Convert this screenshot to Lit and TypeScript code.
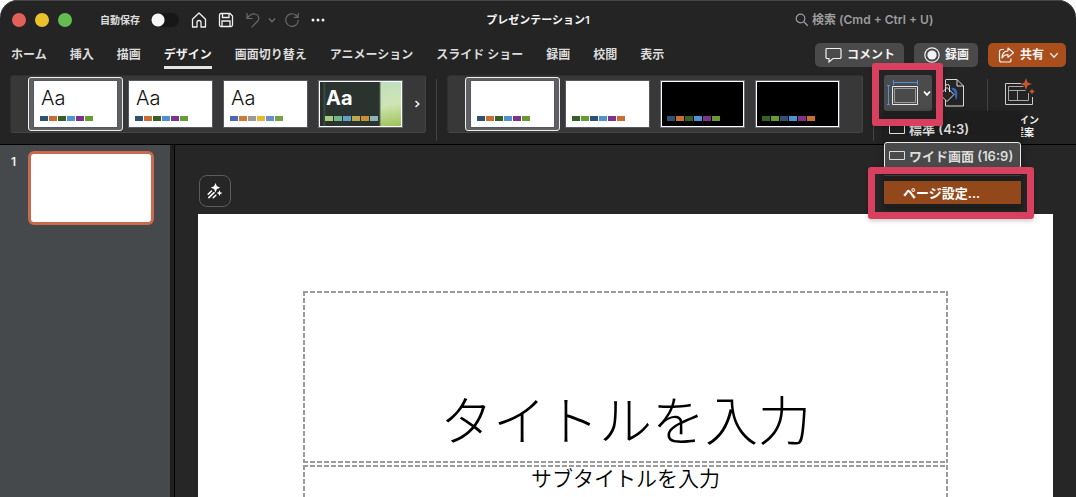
import { LitElement, html, css, svg, nothing } from "lit";
import { customElement, property } from "lit/decorators.js";
import { classMap } from "lit/directives/class-map.js";
import { styleMap } from "lit/directives/style-map.js";

interface Design {
  name: string;
  kind: "light" | "plain" | "black" | "green";
  colors: string[];
  selected?: boolean;
}

const office = ["#2f5274", "#cb6d33", "#376026", "#4f92d1", "#7f3289", "#679b33"];
const shuffled = ["#376026", "#679b33", "#2f5274", "#4f92d1", "#7f3289", "#cb6d33"];

const themes: Design[] = [
  { name: "Office テーマ", kind: "light", colors: office, selected: true },
  { name: "Office テーマ 2", kind: "light", colors: office },
  { name: "Office 2013", kind: "light", colors: ["#4a68b8", "#cf7a37", "#999999", "#e8b92c", "#6690cc", "#77a044"] },
  { name: "グリーン", kind: "green", colors: ["#a5ce7d", "#72b78c", "#639fc8", "#bda84f", "#c98f35", "#8fb3bb"] },
];

const variants: Design[] = [
  { name: "バリエーション 1", kind: "plain", colors: office, selected: true },
  { name: "バリエーション 2", kind: "plain", colors: shuffled },
  { name: "バリエーション 3", kind: "black", colors: office },
  { name: "バリエーション 4", kind: "black", colors: shuffled },
];

const tabs = ["ホーム", "挿入", "描画", "デザイン", "画面切り替え", "アニメーション", "スライド ショー", "録画", "校閲", "表示"];

const icon = (w: number, h: number, body: unknown) =>
  html`<svg width=${w} height=${h} viewBox="0 0 ${w} ${h}" fill="none" stroke="currentColor" aria-hidden="true">${body}</svg>`;

const homeIcon = icon(16, 16, svg`<path d="M1.5 7.2 8 1l6.500 6.200V15H10V10.500a2 2 0 0 0-4 0V15H1.500z" stroke-width="1.300" stroke-linejoin="round"/>`);
const saveIcon = icon(16, 16, svg`<path d="M1.500 3a1.500 1.500 0 0 1 1.500-1.500H12l2.500 2.500V13a1.500 1.500 0 0 1-1.500 1.500H3A1.500 1.500 0 0 1 1.500 13zM4.500 1.500v4h6.500v-4M4 14.500V9h8v5.500" stroke-width="1.300"/>`);
const undoIcon = icon(14, 16, svg`<path d="M1 1v5.500h5.500M1.300 6.200C3.500 3 6 1.500 9 2c3.500.6 5 4.200 2.800 7L5.500 15.300" stroke-width="1.200"/>`);
const redoIcon = icon(16, 16, svg`<path d="M14.300 8A6.300 6.300 0 1 1 12 3.200L14 5.200M14.200 1v4.400H9.800" stroke-width="1.200"/>`);
const chevron = (w: number, sw: number) =>
  html`<svg width=${w} height=${w} viewBox="0 0 8 8" fill="none" stroke="currentColor" stroke-width=${sw} aria-hidden="true"><path d="M1 2.500 4 5.800 7 2.500"/></svg>`;
const dotsIcon = icon(14, 4, svg`<g fill="currentColor" stroke="none"><circle cx="2" cy="2" r="1.500"/><circle cx="7" cy="2" r="1.500"/><circle cx="12" cy="2" r="1.500"/></g>`);
const searchIcon = icon(14, 14, svg`<circle cx="5.500" cy="5.500" r="4.300" stroke-width="1.200"/><path d="m8.800 8.800 4 4" stroke-width="1.300"/>`);
const commentIcon = icon(17, 16, svg`<path d="M2 1.500h13a1 1 0 0 1 1 1v8a1 1 0 0 1-1 1H8L4 15v-3.500H2a1 1 0 0 1-1-1v-8a1 1 0 0 1 1-1z" stroke-width="1.200"/>`);
const recordIcon = icon(16, 16, svg`<circle cx="8" cy="8" r="7.200" stroke-width="1.200"/><circle cx="8" cy="8" r="4.600" fill="currentColor" stroke="none"/>`);
const shareIcon = icon(17, 16, svg`<path d="M6 2.500H3.500a2 2 0 0 0-2 2V13a2 2 0 0 0 2 2H11a2 2 0 0 0 2-2v-1.500M10 1l5.500 4.700L10 10.400V7.600C7 7.600 5.300 8.600 4 11c0-4 2-6.800 6-7.200z" stroke-width="1.200" stroke-linejoin="round"/>`);
const slideSizeIcon = icon(32, 26, svg`<g stroke="#4f8fe0"><path d="M6.500 2.500h24M6.500 0v5M30.500 0v5M1.500 5.500v19M0 5.500h3M0 24.500h3"/></g><path d="M5.500 6.500h25v18h-25z" stroke="#e6e6e6"/><path d="M7.500 8.500h21v14h-21z" stroke="#9a9a9a"/>`);
const formatIcon = icon(24, 30, svg`<path d="M5 1.500h11l6.500 6.500v20h-18v-6M4.500 8V1.500M16 1.500V8h6.500" stroke="#d9d9d9"/><path d="M10 10c6-1 7.500 4 5.500 12-2-2-1-6-2.500-8z" fill="#3565b8" stroke="none"/><path d="M-1 16.500 6 9.500l7 7-7 7z" fill="#262626" stroke="#e2e2e2"/><path d="M4.500 14V8.500a2 2 0 0 1 4 0V14" stroke="#e2e2e2"/>`);
const designerIcon = icon(30, 28, svg`<path d="M4.500 8.500h15M4.500 8.500v14h20V15M13.500 12.500v10M4.500 12.500h17" stroke="#a8a8a8"/><path d="M17 5.500H1.500v21h27V19" stroke="#cccccc"/><path d="M22 0l1.600 4.400L28 6l-4.400 1.600L22 12l-1.600-4.400L16 6l4.400-1.600zM28 10.500l1 2 2 1-2 1-1 2-1-2-2-1 2-1z" fill="#c95430" stroke="none"/>`);
const sparkleIcon = icon(16, 16, svg`<g fill="currentColor" stroke="none"><path d="M8.500 0l1.400 3.300L13.200 4.700 9.900 6.100 8.500 9.400 7.100 6.100 3.800 4.700 7.100 3.300zM12.500 7.200l.9 2 2 .9-2 .9-.9 2-.9-2-2-.9 2-.9z"/></g><path d="M1.200 11.200 4.500 8M1.800 14.600 7 9.600M6.200 14.800l2.600-2.600" stroke-width="1.500" stroke-linecap="round"/>`);

@customElement("design-gallery")
export class DesignGallery extends LitElement {
  @property({ attribute: false }) designs: Design[] = [];
  @property({ type: Boolean }) more = false;

  static styles = css`
    :host {
      display: flex;
      align-items: center;
      box-sizing: border-box;
      height: 58px;
      padding-left: 17px;
      border: 1px solid #444;
      border-top-color: #303030;
      border-left-color: #303030;
      border-radius: 3px;
      background: #383838;
      overflow: hidden;
    }
    .cell {
      flex: none;
      box-sizing: border-box;
      width: 95px;
      height: 54px;
      padding: 2px 4px;
      border: 1px solid transparent;
      border-radius: 3px;
      background: none;
      font: inherit;
    }
    .selected {
      border-color: #eee;
      background: #5f6062;
    }
    .thumb {
      display: flex;
      flex-direction: column;
      justify-content: flex-end;
      box-sizing: border-box;
      height: 48px;
      padding: 0 6px 6px;
      border: 1px solid #555765;
      background: #fff;
      color: #111;
      text-align: left;
    }
    .black, .green {
      border-color: #666876;
      box-shadow: inset 0 0 0 1px #fff;
    }
    .black { background: #000; }
    .green {
      color: #fff;
      background: linear-gradient(90deg, #263029 4px, #3d5048 5px, #2a332e 7px, #2a332e 60px, #5a6c5c 61px, transparent 62px),
        linear-gradient(170deg, #b9dcc0, #cfe4b4 60%, #9ac050);
    }
    .sample {
      flex: 1;
      padding: 4px 0 0 1px;
      font-size: 20px;
      line-height: 26px;
      font-weight: 300;
    }
    .green .sample { font-weight: 700; }
    .swatches { display: flex; gap: 1px; }
    .swatch { width: 8px; height: 5px; }
    .more {
      flex: none;
      padding: 0;
      margin-left: 5px;
      border: 0;
      background: none;
      color: #f0f0f0;
      line-height: 0;
      transform: rotate(-90deg);
    }
  `;

  render() {
    return html`
      ${this.designs.map(
        (d) => html`<button class=${classMap({ cell: true, selected: !!d.selected })} aria-label=${d.name}>
          <div class="thumb ${d.kind}">
            ${d.kind === "light" || d.kind === "green" ? html`<div class="sample">Aa</div>` : nothing}
            <div class="swatches">${d.colors.map((c) => html`<span class="swatch" style=${styleMap({ background: c })}></span>`)}</div>
          </div>
        </button>`
      )}
      ${this.more ? html`<button class="more" aria-label="その他">${chevron(8, 1.6)}</button>` : nothing}
    `;
  }
}

@customElement("app-root")
export class AppRoot extends LitElement {
  static styles = css`
    :host {
      display: block;
      height: 100vh;
      overflow: hidden;
      background: #fff;
      color: #dcdcdc;
      font: 600 12px/18px Inter, "Noto Sans CJK JP", sans-serif;
    }
    * { box-sizing: border-box; }
    button {
      display: flex;
      align-items: center;
      padding: 0;
      border: 0;
      background: none;
      color: inherit;
      font: inherit;
      white-space: nowrap;
    }
    svg { flex: none; display: block; overflow: visible; }
    .window {
      display: flex;
      flex-direction: column;
      height: 100%;
      border-radius: 18px 18px 0 0;
      background: #242424;
      box-shadow: inset 0 1px #454545;
      overflow: hidden;
    }
    .titlebar {
      display: grid;
      grid-template-columns: 1fr auto 1fr;
      align-items: center;
      height: 40px;
    }
    .quick { display: flex; align-items: center; padding-left: 12px; }
    .lights { display: flex; gap: 9px; margin-right: 28px; }
    .light { width: 14px; height: 14px; border-radius: 50%; }
    .close { background: #e0605a; }
    .minimize { background: #ecc22c; }
    .zoom { background: #65bc50; }
    .autosave { display: flex; align-items: center; gap: 11px; margin-right: 12px; font-size: 10px; }
    .toggle {
      appearance: none;
      width: 28px;
      height: 14px;
      margin: 0;
      border-radius: 7px;
      background: radial-gradient(circle at 7px 7px, #f7f7f7 6px, transparent 7px) #171717;
    }
    .tools { display: flex; align-items: center; color: #f0f0f0; }
    .tools button + button { margin-left: 11px; }
    .tools .dim { color: #6a6a6a; }
    .tools .undo { margin-left: 12px; }
    .tools .narrow { margin-left: 8px; }
    .title { margin: 0; font-size: 11px; font-weight: 600; color: #f4f4f4; }
    .search {
      display: flex;
      align-items: center;
      gap: 3px;
      justify-self: end;
      margin-right: 137px;
      color: #9c9c9c;
    }
    .search input {
      width: 127px;
      padding: 0;
      border: 0;
      outline: 0;
      background: none;
      color: inherit;
      font: inherit;
    }
    .search input::placeholder { color: #9c9c9c; opacity: 1; }
    .menubar {
      display: flex;
      align-items: center;
      justify-content: space-between;
      height: 30px;
      padding: 0 10px 0 11px;
    }
    .tabs { display: flex; gap: 23px; }
    .tab { height: 28px; border-bottom: 3px solid transparent; border-top: 3px solid transparent; }
    .active { border-image: linear-gradient(#e4e4e4, #e4e4e4) 0 0 3 0; color: #f2f2f2; }
    .actions { display: flex; gap: 10px; }
    .action {
      gap: 5px;
      height: 24px;
      padding: 0 9px 0 10px;
      border-radius: 5px;
      background: #4a4a4a;
      color: #f2f2f2;
    }
    .share { padding: 0 7px 0 10px; background: #aa4f1c; }
    .ribbon {
      display: flex;
      gap: 10px;
      height: 75px;
      padding: 5px 36px 0 10px;
      border-bottom: 1px solid #000;
    }
    design-gallery { flex: 1; min-width: 0; }
    .divider { width: 1px; height: 62px; margin-top: 4px; background: #444; }
    .size { position: relative; z-index: 1; width: 48px; }
    .size-button { gap: 4px; width: 48px; height: 36px; padding-left: 3px; border-radius: 3px; background: #4b4b4b; color: #fff; }
    .menu {
      position: absolute;
      top: 36px;
      left: 0;
      width: 137px;
      padding: 4px 0 3px;
      border-radius: 0 0 4px 4px;
      background: #1e1e1e;
      box-shadow: 0 2px 6px #0006;
      font-size: 13px;
    }
    .item { gap: 4px; width: 100%; height: 27px; padding-left: 4px; border: 1px solid transparent; }
    .current { border-color: #e8e8e8; border-radius: 3px; background: #4a4a4a; }
    .rule { height: 1px; margin: 6px 0 5px; background: #3a3a3a; }
    .setup { position: relative; height: 23px; padding-left: 19px; border: 0; background: #92481a; color: #fff; }
    .callout { position: absolute; border: 7px solid #d94060; border-radius: 3px; pointer-events: none; box-shadow: 0 2px 4px #0003; }
    .callout-size { top: -12px; left: -12px; width: 71px; height: 63px; }
    .callout-setup { top: -14px; left: -16px; width: 166px; height: 52px; }
    .format { width: 30px; height: 36px; margin-right: 8px; margin-left: -3px; padding-left: 2px; }
    .designer {
      flex-direction: column;
      gap: 8px;
      width: 42px;
      padding-top: 3px;
      font-size: 10px;
      line-height: 12px;
      color: #f2f2f2;
    }
    .body { flex: 1; display: flex; min-height: 0; }
    .slides {
      display: flex;
      align-items: flex-start;
      gap: 11px;
      width: 175px;
      margin: 0;
      padding: 6px 16px 0 11px;
      border-right: 1px solid #000;
      background: linear-gradient(90deg, #46494b 170px, #1f1f1f 170px);
    }
    .number { width: 6px; padding-top: 2px; color: #eee; }
    .slide-thumb { flex: 1; height: 74px; margin-right: 4px; border: 3px solid #c9694d; border-radius: 6px; background: #fff; }
    .canvas {
      flex: 1;
      min-width: 0;
      padding: 30px 23px 0;
      background: #262626;
      overflow: hidden;
    }
    .ideas {
      justify-content: center;
      width: 32px;
      height: 32px;
      margin: 0 0 7px 1px;
      border: 1px solid #5c5c5c;
      border-radius: 8px;
      color: #fff;
    }
    .page {
      display: flex;
      flex-direction: column;
      gap: 2px;
      aspect-ratio: 16 / 9;
      padding: 77px 105px 0;
      background: #fff;
      color: #000;
      text-align: center;
    }
    .holder {
      margin: 0;
      background:
        repeating-linear-gradient(90deg, #9b9b9b 0 5px, transparent 5px 7px) top / 100% 2px no-repeat,
        repeating-linear-gradient(90deg, #9b9b9b 0 5px, transparent 5px 7px) bottom / 100% 2px no-repeat,
        repeating-linear-gradient(#9b9b9b 0 5px, transparent 5px 7px) left / 2px 100% no-repeat,
        repeating-linear-gradient(#9b9b9b 0 5px, transparent 5px 7px) right / 2px 100% no-repeat;
    }
    .heading {
      display: flex;
      align-items: flex-end;
      justify-content: center;
      height: 172px;
      padding-bottom: 5px;
      font-size: 53px;
      font-weight: 300;
      line-height: 72px;
    }
    .sub { height: 120px; font-size: 21px; font-weight: 350; line-height: 28px; }
  `;

  render() {
    return html`
      <div class="window">
        <header class="titlebar">
          <div class="quick">
            <div class="lights"><span class="light close"></span><span class="light minimize"></span><span class="light zoom"></span></div>
            <label class="autosave">自動保存<input class="toggle" type="checkbox" role="switch" /></label>
            <div class="tools">
              <button aria-label="ホーム画面">${homeIcon}</button>
              <button aria-label="保存">${saveIcon}</button>
              <button class="dim undo" aria-label="元に戻す">${undoIcon}</button>
              <button class="dim narrow" aria-label="元に戻すの履歴">${chevron(8, 1.4)}</button>
              <button class="dim narrow" aria-label="繰り返し">${redoIcon}</button>
              <button class="more" aria-label="その他のコマンド">${dotsIcon}</button>
            </div>
          </div>
          <h1 class="title">プレゼンテーション1</h1>
          <label class="search">${searchIcon}<input type="text" aria-label="検索" placeholder="検索 (Cmd + Ctrl + U)" /></label>
        </header>
        <div class="menubar">
          <nav class="tabs">
            ${tabs.map((t) => html`<button class=${classMap({ tab: true, active: t === "デザイン" })}>${t}</button>`)}
          </nav>
          <div class="actions">
            <button class="action">${commentIcon}コメント</button>
            <button class="action">${recordIcon}録画</button>
            <button class="action share">${shareIcon}共有${chevron(10, 1.1)}</button>
          </div>
        </div>
        <div class="ribbon">
          <design-gallery .designs=${themes} more></design-gallery>
          <span class="divider"></span>
          <design-gallery .designs=${variants}></design-gallery>
          <span class="divider"></span>
          <div class="size">
            <button class="size-button" aria-label="スライドのサイズ" aria-expanded="true">${slideSizeIcon}${chevron(8, 1.8)}</button>
            <div class="menu" role="menu">
              <button class="item" role="menuitem">${icon(16, 11, svg`<path d="M.5.5h15v10H.500z"/>`)}標準 (4:3)</button>
              <button class="item current" role="menuitem">${icon(16, 9, svg`<path d="M.5.5h15v8H.500z"/>`)}ワイド画面 (16:9)</button>
              <div class="rule"></div>
              <button class="item setup" role="menuitem">ページ設定...<span class="callout callout-setup"></span></button>
            </div>
            <span class="callout callout-size"></span>
          </div>
          <button class="format" aria-label="背景の書式設定">${formatIcon}</button>
          <span class="divider"></span>
          <button class="designer">${designerIcon}<span>デザイン<br />の提案</span></button>
        </div>
        <div class="body">
          <aside class="slides">
            <span class="number">1</span>
            <button class="slide-thumb" aria-label="スライド 1"></button>
          </aside>
          <main class="canvas">
            <button class="ideas" aria-label="デザイン アイデア">${sparkleIcon}</button>
            <section class="page">
              <h2 class="holder heading">タイトルを入力</h2>
              <p class="holder sub">サブタイトルを入力</p>
            </section>
          </main>
        </div>
      </div>
    `;
  }
}
